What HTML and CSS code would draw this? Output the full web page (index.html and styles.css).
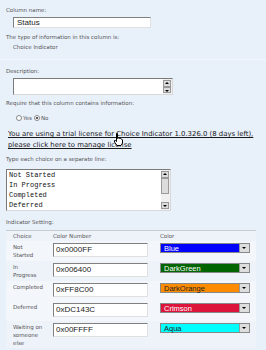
FILE: index.html
```html
<!DOCTYPE html>
<html lang="en">
<head>
    <meta charset="UTF-8">
    <title>Choice Indicator column</title>
    <link rel="stylesheet" href="styles.css">
</head>
<body>
    <div class="section">
        <div class="label">Column name:</div>
        <div class="field name-field">Status</div>
        <div class="label type-label">The type of information in this column is:</div>
        <div class="label indent">Choice Indicator</div>
    </div>

    <div class="section second">
        <div class="label">Description:</div>
        <div class="area desc-area">
            <div class="scroll">
                <span class="arrow up"></span>
                <span class="arrow down"></span>
            </div>
        </div>

        <div class="label require">Require that this column contains information:</div>
        <div class="radios">
            <span class="radio"></span><span class="label">Yes</span>
            <span class="radio checked"></span><span class="label">No</span>
        </div>

        <div class="notice">
            <a href="#">You are using a trial license for Choice Indicator 1.0.326.0 (8 days left),</a>
            <a href="#">please click here to manage license</a>
            <svg class="hand" width="9" height="13" viewBox="0 0 9 13">
                <path d="M2.5 0.5 L3.5 0.5 L3.5 5.5 L4.5 5 L5.5 5.5 L6.5 5.5 L7.5 6 L8.5 7 L8.5 10 L7 12.5 L3 12.5 L0.5 9 L0.5 7.5 L1.5 7.5 L2.5 8.5 Z" fill="#fff" stroke="#000" stroke-width="1"/>
            </svg>
        </div>

        <div class="label">Type each choice on a separate line:</div>
        <div class="area choice-area">
            <div class="choices">Not Started
In Progress
Completed
Deferred</div>
            <div class="scroll">
                <span class="arrow up"></span>
                <span class="thumb"></span>
                <span class="arrow down"></span>
            </div>
        </div>

        <div class="label setting">Indicator Setting:</div>
        <div class="table">
            <div class="row head">
                <span class="label">Choice</span>
                <span class="label">Color Number</span>
                <span class="label">Color</span>
            </div>
            <div class="row light">
                <span class="label">Not<br>Started</span>
                <span class="field num">0x0000FF</span>
                <span class="pick" style="background:#0000ff;color:#fff">Blue<i></i></span>
            </div>
            <div class="row">
                <span class="label">In<br>Progress</span>
                <span class="field num">0x006400</span>
                <span class="pick" style="background:#006400;color:#fff">DarkGreen<i></i></span>
            </div>
            <div class="row light">
                <span class="label">Completed</span>
                <span class="field num">0xFF8C00</span>
                <span class="pick" style="background:#ff8c00;color:#222">DarkOrange<i></i></span>
            </div>
            <div class="row light">
                <span class="label">Deferred</span>
                <span class="field num">0xDC143C</span>
                <span class="pick" style="background:#dc143c;color:#fff">Crimson<i></i></span>
            </div>
            <div class="row last">
                <span class="label">Waiting on<br>someone<br>else</span>
                <span class="field num">0x00FFFF</span>
                <span class="pick" style="background:#00ffff;color:#222">Aqua<i></i></span>
            </div>
        </div>
    </div>
</body>
</html>
```

FILE: styles.css
```css
body {
    margin: 0;
    background-color: #e8f0fa;
    font-family: "DejaVu Sans", Verdana, sans-serif;
    width: 266px;
    height: 350px;
    overflow: hidden;
}

.label {
    font-size: 5.5px;
    color: #555;
    line-height: 8px;
    height: 8px;
}

.section {
    padding: 6px 0 8px 6px;
    border-bottom: 1px solid #f4f8fd;
}

.second {
    padding-top: 7px;
}

.indent {
    margin-left: 7px;
    margin-top: 2px;
}

.type-label {
    margin-top: 5px;
}

.field {
    background: #fff;
    border-top: 1px solid #808080;
    border-left: 1px solid #808080;
    border-right: 1px solid #e0e0e0;
    border-bottom: 1px solid #e0e0e0;
    font-family: "Liberation Sans", Arial, sans-serif;
    font-size: 8px;
    color: #222;
    box-sizing: border-box;
}

.name-field {
    margin: 3px 0 0 7px;
    width: 138px;
    height: 11px;
    line-height: 9px;
    padding-left: 3px;
}

.area {
    position: relative;
    background: #fff;
    border-top: 1px solid #7a7a7a;
    border-left: 1px solid #7a7a7a;
    border-right: 1px solid #d8d8d8;
    border-bottom: 1px solid #d8d8d8;
    box-sizing: border-box;
    display: flex;
    justify-content: space-between;
}

.desc-area {
    margin: 3px 0 0 7px;
    width: 160px;
    height: 17px;
}

.choice-area {
    margin: 6px 0 0 0;
    width: 165px;
    height: 42px;
}

.scroll {
    width: 9px;
    margin-left: auto;
    background: #f0f0f0;
    display: flex;
    flex-direction: column;
    justify-content: space-between;
    padding: 1px 0;
}

.arrow, .thumb {
    display: block;
    width: 8px;
    height: 7px;
    background: #dcdcdc;
    border: 1px solid #999;
    box-sizing: border-box;
    position: relative;
}

.arrow::after {
    content: "";
    position: absolute;
    left: 1px;
    top: 1px;
    border-left: 2px solid transparent;
    border-right: 2px solid transparent;
}

.up::after {
    border-bottom: 2px solid #000;
}

.down::after {
    top: 2px;
    border-top: 2px solid #000;
}

.thumb {
    height: 16px;
    margin-bottom: auto;
}

.choices {
    font-family: "Liberation Mono", "Courier New", monospace;
    font-size: 7px;
    line-height: 10px;
    color: #111;
    white-space: pre;
    padding: 0 0 0 2px;
}

.require {
    margin-top: 4px;
}

.radios {
    display: flex;
    align-items: center;
    margin: 6px 0 0 10px;
    height: 9px;
}

.radios .label {
    margin: 0 2px 0 1px;
}

.radio {
    width: 4px;
    height: 4px;
    border-radius: 50%;
    border: 1px solid #888;
    background: #fff;
    position: relative;
}

.checked::after {
    content: "";
    position: absolute;
    left: 1px;
    top: 1px;
    width: 2px;
    height: 2px;
    border-radius: 50%;
    background: #222;
}

.notice {
    position: relative;
    margin: 7px 0 4px 2px;
}

.notice a {
    display: block;
    height: 11px;
    font-size: 6.9px;
    line-height: 11px;
    color: #1a1a1a;
    text-decoration: underline;
}

.hand {
    position: absolute;
    left: 106px;
    top: 4px;
}

.setting {
    margin-top: 7px;
}

.table {
    margin: 4px 0 0 0;
    width: 250px;
    border-top: 1px solid #c8cdd4;
    background: #eef3fa;
}

.row {
    display: grid;
    grid-template-columns: 40px 107px 90px;
    align-items: start;
    padding: 2px 0 0 7px;
    height: 20px;
    box-sizing: border-box;
}

.row.light {
    background: #f3f6fb;
}

.row.head {
    height: 10px;
    background: #eef3fa;
    padding-top: 1px;
}

.row.last {
    height: 27px;
}

.row .label {
    line-height: 8px;
    height: auto;
}

.num {
    width: 95px;
    height: 14px;
    line-height: 12px;
    padding-left: 2px;
}

.pick {
    position: relative;
    display: block;
    width: 90px;
    height: 10px;
    font-family: "Liberation Sans", Arial, sans-serif;
    font-size: 7.5px;
    line-height: 9px;
    padding-left: 3px;
    box-sizing: border-box;
    border: 1px solid #888;
}

.pick i {
    position: absolute;
    right: 0;
    top: 0;
    width: 9px;
    height: 8px;
    background: #ddd;
    border-left: 1px solid #999;
}

.pick i::after {
    content: "";
    position: absolute;
    left: 2px;
    top: 3px;
    border-left: 2px solid transparent;
    border-right: 2px solid transparent;
    border-top: 2px solid #000;
}
```
